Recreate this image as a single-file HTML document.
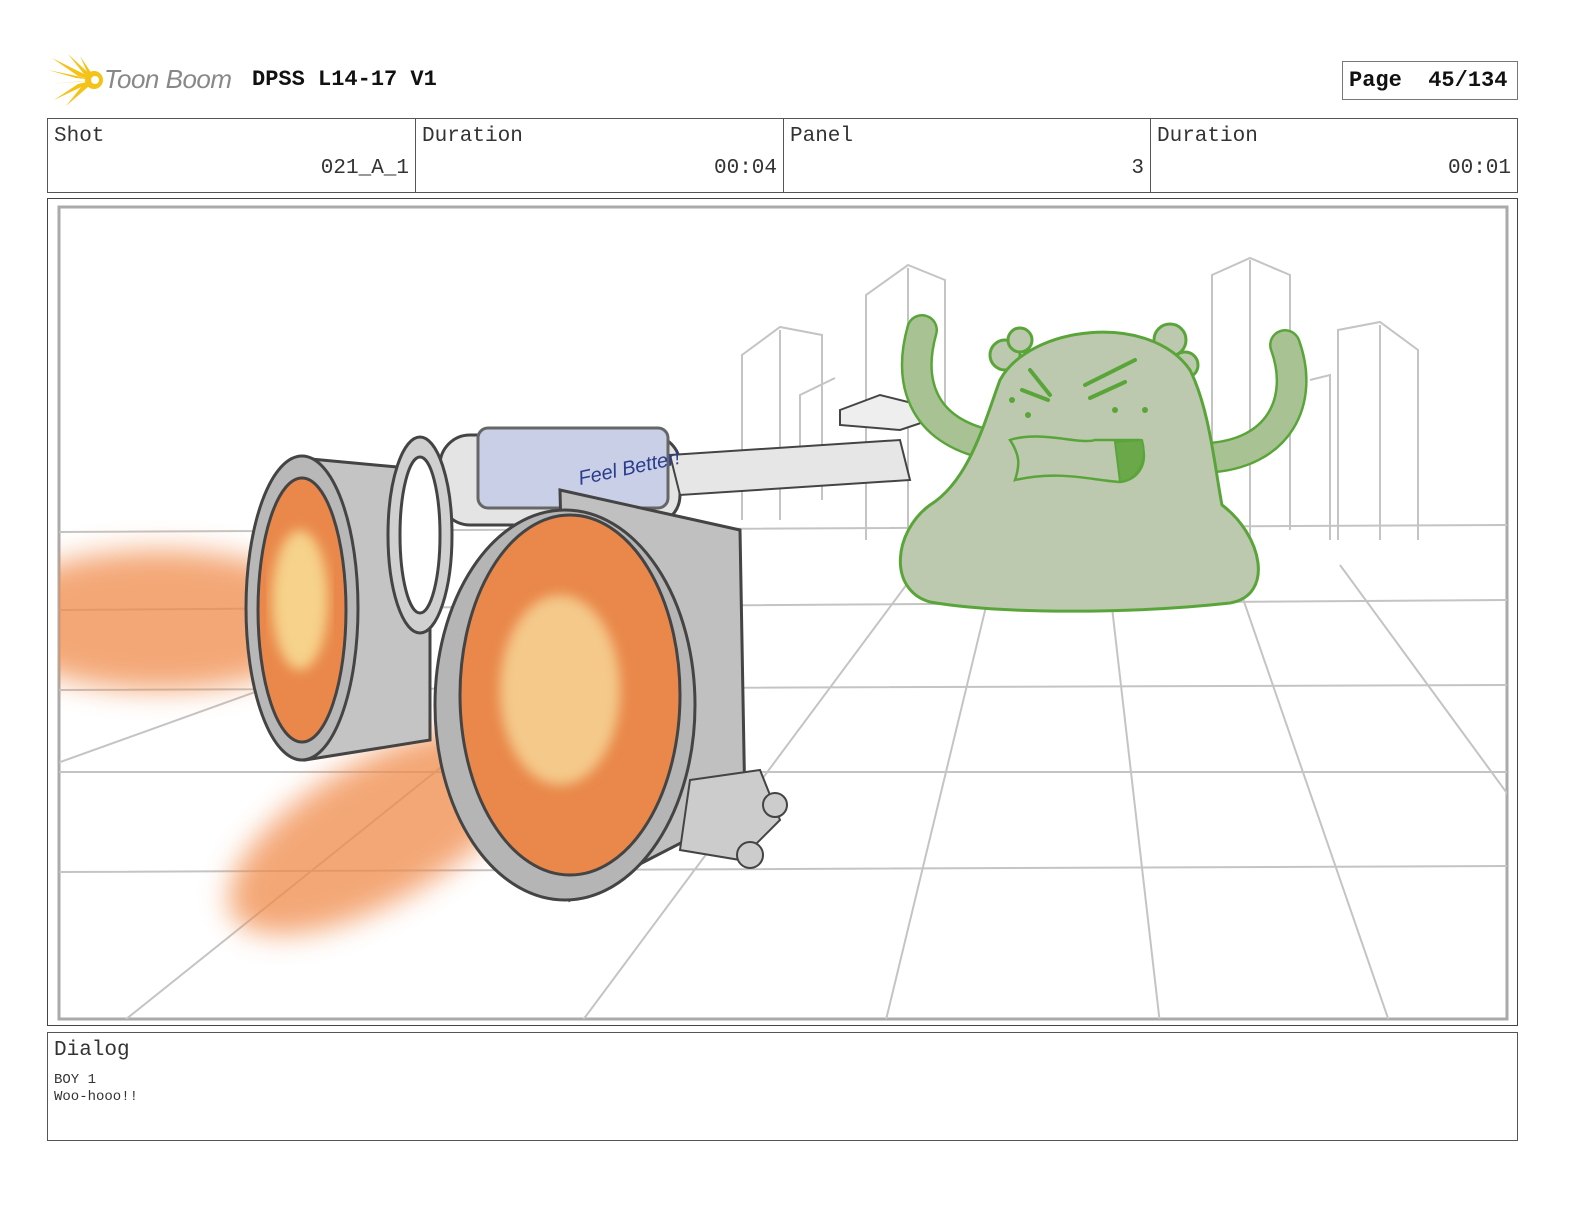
<!DOCTYPE html>
<html><head><meta charset="utf-8"><style>
*{margin:0;padding:0;box-sizing:border-box}
body{width:1584px;height:1224px;background:#fff;position:relative;font-family:"Liberation Mono",monospace;color:#222;overflow:hidden}
.abs{position:absolute}
.cell{position:absolute;top:118px;height:75px;border:1px solid #555;}
.lab{position:absolute;left:6px;top:6px;font-size:21px;color:#333}
.val{position:absolute;right:6px;top:38px;font-size:21px;color:#333}
</style></head><body>
<svg class="abs" style="left:48px;top:54px" width="60" height="52" viewBox="0 0 60 52">
<g fill="#f5c318">
<polygon points="48,26 4,4 30,22"/><polygon points="48,26 0,16 28,24"/><polygon points="48,26 2,30 28,28"/><polygon points="48,26 6,46 30,30"/><polygon points="48,26 18,52 34,32"/><polygon points="48,26 20,0 36,20"/><polygon points="48,26 32,2 40,20"/>
<circle cx="46" cy="26" r="9"/></g><circle cx="47" cy="26" r="4" fill="#fff"/>
</svg>
<div class="abs" style="left:104px;top:64px;font-family:'Liberation Sans',sans-serif;font-style:italic;font-size:26px;color:#888;letter-spacing:-0.5px">Toon Boom</div>
<div class="abs" style="left:252px;top:67px;font-size:22px;font-weight:bold;color:#111">DPSS L14-17 V1</div>
<div class="abs" style="left:1342px;top:61px;width:176px;height:39px;border:1px solid #777"></div>
<div class="abs" style="left:1349px;top:68px;font-size:22px;font-weight:bold;color:#111;white-space:pre">Page  45/134</div>

<div class="cell" style="left:47px;width:369px"><div class="lab">Shot</div><div class="val">021_A_1</div></div>
<div class="cell" style="left:415px;width:369px"><div class="lab">Duration</div><div class="val">00:04</div></div>
<div class="cell" style="left:783px;width:368px"><div class="lab">Panel</div><div class="val">3</div></div>
<div class="cell" style="left:1150px;width:368px"><div class="lab">Duration</div><div class="val">00:01</div></div>

<div class="abs" style="left:47px;top:198px;width:1471px;height:828px;border:1px solid #444"></div>
<svg class="abs" style="left:0;top:0" width="1584" height="1224">
<defs>
<filter id="b" x="-30%" y="-30%" width="160%" height="160%"><feGaussianBlur stdDeviation="14"/></filter>
<filter id="b2"><feGaussianBlur stdDeviation="6"/></filter>
<clipPath id="c"><rect x="59" y="207" width="1448" height="812"/></clipPath>
</defs>
<rect x="59" y="207" width="1448" height="812" fill="none" stroke="#aaa" stroke-width="3"/>
<g clip-path="url(#c)" stroke="#c4c4c4" stroke-width="2" fill="none">
<path d="M52 532 L1512 525 M52 610 L1512 600 M52 690 L1512 685 M52 772 L1512 772 M52 872 L1512 866"/>
<path d="M120 1024 L700 560 M580 1024 L910 580 M885 1024 L990 590 M1160 1024 L1110 590 M1390 1024 L1240 590 M1512 800 L1340 565 M52 765 L400 640"/>
<path d="M742 520 V355 L780 327 L822 335 V500 M780 330 V520 M866 540 V295 L908 265 L945 280 V430 M908 268 V540 M1212 520 V275 L1250 258 L1290 275 V530 M1250 260 V540 M1338 540 V330 L1380 322 L1418 350 V540 M1380 325 V540 M800 480 V395 L835 378 M1310 380 L1330 375 V540"/>
</g>
<g clip-path="url(#c)">
<ellipse cx="160" cy="620" rx="170" ry="70" fill="#f08a4a" opacity=".75" filter="url(#b)"/>
<ellipse cx="380" cy="830" rx="170" ry="70" fill="#f08a4a" opacity=".75" filter="url(#b)" transform="rotate(-30 380 830)"/>
</g>
<g stroke="#444" stroke-width="3">
<path d="M300 458 L430 470 L430 740 L305 760 Z" fill="#c4c4c4"/>
<ellipse cx="302" cy="608" rx="56" ry="152" fill="#b8b8b8"/>
<ellipse cx="302" cy="610" rx="44" ry="132" fill="#e9884a"/>
<rect x="440" y="435" width="240" height="90" rx="30" fill="#e4e4e4"/>
<rect x="478" y="428" width="190" height="80" rx="10" fill="#c9cfe6" stroke="#666"/>
<ellipse cx="420" cy="535" rx="32" ry="98" fill="#d0d0d0"/>
<ellipse cx="420" cy="535" rx="20" ry="78" fill="#fff"/>
<path d="M670 455 L900 440 L910 480 L680 495 Z" fill="#e6e6e6" stroke-width="2"/>
<path d="M840 410 L880 395 L920 405 L930 420 L900 430 L840 425 Z" fill="#eee" stroke-width="2"/>
<path d="M560 490 L740 530 L745 810 L570 900 Z" fill="#c0c0c0"/>
<ellipse cx="565" cy="705" rx="130" ry="195" fill="#b5b5b5"/>
<ellipse cx="570" cy="695" rx="110" ry="180" fill="#e9884a"/>
<path d="M690 780 L760 770 L780 820 L740 860 L680 850 Z" fill="#ccc" stroke-width="2"/>
<circle cx="775" cy="805" r="12" fill="#ccc" stroke-width="2"/><circle cx="750" cy="855" r="13" fill="#ccc" stroke-width="2"/>
</g>
<ellipse cx="300" cy="600" rx="28" ry="70" fill="#f6d28a" filter="url(#b2)"/>
<ellipse cx="560" cy="690" rx="60" ry="95" fill="#f4c98a" filter="url(#b2)"/>
<text x="580" y="485" font-family="Liberation Sans,sans-serif" font-style="italic" font-size="20" fill="#2a3c8c" transform="rotate(-12 580 485)">Feel Better!</text>
<g fill="none" stroke-linecap="round">
<path d="M922 330 C908 380 920 430 990 445" stroke="#5aa53a" stroke-width="32"/>
<path d="M922 330 C908 380 920 430 990 445" stroke="#a9c294" stroke-width="27"/>
<path d="M1285 345 C1305 400 1280 455 1205 458" stroke="#5aa53a" stroke-width="32"/>
<path d="M1285 345 C1305 400 1280 455 1205 458" stroke="#a9c294" stroke-width="27"/>
</g>
<g stroke="#5aa53a" stroke-width="3" fill="#bcc9ae">
<circle cx="1005" cy="355" r="15"/><circle cx="1020" cy="340" r="12"/>
<circle cx="1170" cy="340" r="16"/><circle cx="1185" cy="365" r="13"/>
<path d="M1000 380 C1030 325 1150 312 1190 370 C1210 410 1215 470 1222 505 C1262 535 1275 595 1230 603 C1130 614 1000 614 930 602 C888 590 893 532 930 505 C970 480 985 420 1000 380 Z"/>
<path d="M1010 440 C1040 430 1080 445 1095 440 L1140 440 C1150 460 1140 480 1120 482 C1090 480 1060 470 1015 480 C1020 465 1020 455 1010 440 Z" stroke-width="2.5"/>
<path d="M1115 442 L1142 440 C1148 460 1138 480 1120 482 Z" fill="#6aa84a" stroke-width="2"/>
</g>
<g stroke="#5aa53a" stroke-width="4" stroke-linecap="round">
<path d="M1030 370 L1050 395 M1022 390 L1048 400 M1085 385 L1135 360 M1090 398 L1125 382"/>
</g>
<g fill="#5aa53a"><circle cx="1012" cy="400" r="3"/><circle cx="1028" cy="415" r="3"/><circle cx="1115" cy="410" r="3"/><circle cx="1145" cy="410" r="3"/></g>
</svg>

<div class="abs" style="left:47px;top:1032px;width:1471px;height:109px;border:1px solid #555"></div>
<div class="abs" style="left:54px;top:1039px;font-size:21px;color:#333">Dialog</div>
<div class="abs" style="left:54px;top:1072px;font-size:14px;line-height:17px;color:#333">BOY 1<br>Woo-hooo!!</div>
</body></html>
